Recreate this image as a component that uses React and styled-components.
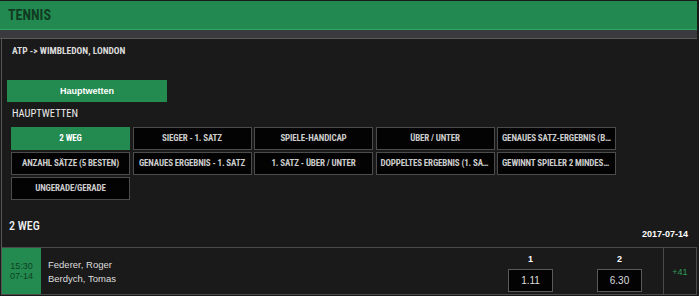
import React from 'react';
import styled, { createGlobalStyle } from 'styled-components';

const GlobalStyle = createGlobalStyle`
  html, body {
    margin: 0;
    padding: 0;
    background: #1a1a1a;
  }
  body {
    font-family: "Liberation Sans", Arial, sans-serif;
  }
`;

const CONDENSED = `"Liberation Sans Narrow", "Roboto Condensed", Roboto, sans-serif`;

const markets = [
  'SIEGER - 1. SATZ',
  'SPIELE-HANDICAP',
  'ÜBER / UNTER',
  'GENAUES SATZ-ERGEBNIS (BEST OF 5)',
  'ANZAHL SÄTZE (5 BESTEN)',
  'GENAUES ERGEBNIS - 1. SATZ',
  '1. SATZ - ÜBER / UNTER',
  'DOPPELTES ERGEBNIS (1. SATZ/SPIEL)',
  'GEWINNT SPIELER 2 MINDESTENS EINEN SATZ',
  'UNGERADE/GERADE',
];

const odds = [
  { label: '1', value: '1.11' },
  { label: '2', value: '6.30' },
];

export default function App() {
  return (
    <>
      <GlobalStyle />
      <Panel>
        <Header>
          <Title>TENNIS</Title>
        </Header>
        <Strip />
        <Body>
          <Breadcrumb>ATP -&gt; WIMBLEDON, LONDON</Breadcrumb>
          <TabButton>Hauptwetten</TabButton>
          <SectionLabel>HAUPTWETTEN</SectionLabel>
          <MarketGrid>
            <MarketButton $active>2 WEG</MarketButton>
            {markets.map((m) => (
              <MarketButton key={m}>{m}</MarketButton>
            ))}
          </MarketGrid>
          <MarketHead>
            <MarketTitle>2 WEG</MarketTitle>
            <DateLabel>2017-07-14</DateLabel>
          </MarketHead>
          <EventRow>
            <TimeCell>
              <span>15:30</span>
              <span>07-14</span>
            </TimeCell>
            <Teams>
              <span>Federer, Roger</span>
              <span>Berdych, Tomas</span>
            </Teams>
            <OddsGroup>
              {odds.map((o) => (
                <OddsCol key={o.label}>
                  <OddsLabel>{o.label}</OddsLabel>
                  <OddsBox>{o.value}</OddsBox>
                </OddsCol>
              ))}
            </OddsGroup>
            <MoreCell>+41</MoreCell>
          </EventRow>
        </Body>
      </Panel>
    </>
  );
}

const Panel = styled.div`
  width: 697px;
  height: 296px;
  background: #1a1a1a;
  overflow: hidden;
`;

const Header = styled.div`
  display: flex;
  align-items: center;
  height: 28px;
  margin-top: 1px;
  padding-left: 8px;
  background: #228a50;
  border-bottom: 1px solid #2fa865;
`;

const Title = styled.h1`
  margin: 0;
  font-family: ${CONDENSED};
  font-size: 14px;
  font-weight: 700;
  color: #103a22;
`;

const Strip = styled.div`
  height: 8px;
  background: #3a3a3e;
  border-bottom: 1px solid #5a5a5a;
`;

const Body = styled.div`
  display: flex;
  flex-direction: column;
  align-items: flex-start;
  border-left: 1px solid #555;
  margin-left: 1px;
  padding-top: 6px;
`;

const Breadcrumb = styled.div`
  margin-left: 10px;
  font-family: ${CONDENSED};
  font-size: 9.5px;
  font-weight: 700;
  color: #dcdcdc;
`;

const TabButton = styled.button`
  margin: 24px 0 0 5px;
  width: 160px;
  height: 22px;
  border: none;
  background: #238a50;
  color: #fff;
  font-family: "Liberation Sans", Arial, sans-serif;
  font-size: 9px;
  font-weight: 700;
  padding: 0;
`;

const SectionLabel = styled.div`
  margin: 5px 0 0 10px;
  font-family: ${CONDENSED};
  font-size: 10.5px;
  color: #ececec;
`;

const MarketGrid = styled.div`
  display: grid;
  grid-template-columns: repeat(5, 119px);
  grid-auto-rows: 23px;
  column-gap: 2.5px;
  row-gap: 2px;
  margin: 7px 0 0 9px;
`;

const MarketButton = styled.div`
  box-sizing: border-box;
  padding: 0 4px;
  background: ${(p) => (p.$active ? '#238a50' : '#030303')};
  border: 1px solid ${(p) => (p.$active ? '#238a50' : '#4c4c4c')};
  color: ${(p) => (p.$active ? '#ffffff' : '#cccccc')};
  font-family: ${CONDENSED};
  font-size: 9px;
  font-weight: 700;
  letter-spacing: -0.15px;
  line-height: 21px;
  text-align: center;
  white-space: nowrap;
  overflow: hidden;
  text-overflow: ellipsis;
`;

const MarketHead = styled.div`
  align-self: stretch;
  display: flex;
  justify-content: space-between;
  align-items: flex-end;
  height: 47px;
  padding: 0 9px 8px 7px;
  box-sizing: border-box;
`;

const MarketTitle = styled.div`
  font-family: ${CONDENSED};
  font-size: 12px;
  font-weight: 500;
  color: #f0f0f0;
  margin-bottom: 6px;
`;

const DateLabel = styled.div`
  font-size: 9px;
  font-weight: 700;
  color: #fff;
`;

const EventRow = styled.div`
  align-self: stretch;
  display: flex;
  height: 46px;
  border-top: 1px solid #4a4a4a;
  border-bottom: 1px solid #4a4a4a;
  border-right: 1px solid #4a4a4a;
`;

const TimeCell = styled.div`
  width: 39px;
  display: flex;
  flex-direction: column;
  align-items: center;
  justify-content: center;
  background: #238a50;
  color: #0f4223;
  font-size: 9px;
  line-height: 10px;
`;

const Teams = styled.div`
  flex: 1;
  display: flex;
  flex-direction: column;
  justify-content: center;
  gap: 3px;
  padding-left: 7px;
  color: #dedede;
  font-size: 9.5px;
  line-height: 11px;
`;

const OddsGroup = styled.div`
  display: flex;
  gap: 44px;
  padding-right: 21px;
`;

const OddsCol = styled.div`
  display: flex;
  flex-direction: column;
  align-items: center;
  padding-top: 6px;
`;

const OddsLabel = styled.div`
  color: #fff;
  font-size: 9px;
  font-weight: 700;
  height: 15px;
`;

const OddsBox = styled.div`
  box-sizing: border-box;
  width: 45px;
  height: 23px;
  display: flex;
  align-items: center;
  justify-content: center;
  background: #030303;
  border: 1px solid #5a5a5a;
  color: #dcdcdc;
  font-size: 10px;
`;

const MoreCell = styled.div`
  width: 32px;
  display: flex;
  align-items: center;
  justify-content: center;
  border-left: 1px solid #4a4a4a;
  color: #2f9a58;
  font-size: 9px;
  padding-top: 2px;
`;
